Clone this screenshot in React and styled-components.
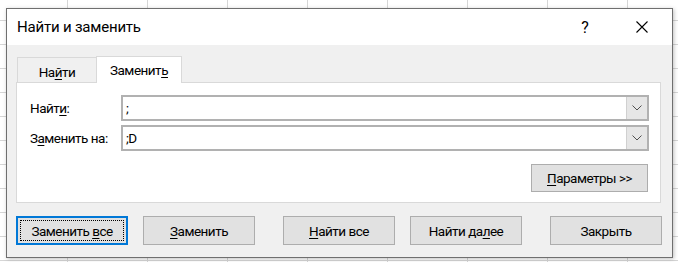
import React from "react";
import styled, { createGlobalStyle } from "styled-components";

const Global = createGlobalStyle`
  html, body { margin: 0; padding: 0; }
  body {
    width: 678px;
    height: 262px;
    overflow: hidden;
    background-color: #ffffff;
    background-image:
      linear-gradient(to right, #d6d6d6 1px, transparent 1px),
      linear-gradient(to bottom, #d6d6d6 1px, transparent 1px);
    background-size: 80px 100%, 100% 24px;
    background-position: 67px 0, 0 20px;
    font-family: Roboto, "Noto Sans", sans-serif;
    color: #000;
  }
  #root { padding: 8px 0 0 6px; }
`;

const Dialog = styled.div`
  width: 665px;
  height: 248px;
  border: 1px solid #6f6f6f;
  background: #f0f0f0;
  box-shadow: 1px 1px 4px rgba(0, 0, 0, 0.25);
  display: flex;
  flex-direction: column;
`;

const TitleBar = styled.div`
  height: 36px;
  background: #ffffff;
  display: flex;
  align-items: center;
  padding: 0 7px 0 10px;
`;

const Title = styled.div`
  flex: 1;
  font-size: 15px;
  letter-spacing: -0.2px;
  color: #000;
`;

const TitleButton = styled.div`
  width: 46px;
  height: 36px;
  display: flex;
  align-items: center;
  justify-content: center;
  font-size: 16px;
  color: #000;
  margin-left: ${(p) => p.$gap || 0}px;
`;

const Body = styled.div`
  padding: 10px 11px 0 9px;
  display: flex;
  flex-direction: column;
  font-size: 13.5px;
  letter-spacing: -0.5px;
`;

const Tabs = styled.div`
  display: flex;
  align-items: flex-end;
  padding-left: 1px;
  height: 27px;
`;

const Tab = styled.div`
  height: ${(p) => (p.$active ? 27 : 25)}px;
  width: ${(p) => p.$w}px;
  box-sizing: border-box;
  border: 1px solid #d9d9d9;
  border-bottom: none;
  border-right: ${(p) => (p.$active ? "1px solid #d9d9d9" : "none")};
  background: ${(p) => (p.$active ? "#ffffff" : "#f0f0f0")};
  display: flex;
  align-items: center;
  justify-content: center;
  padding-top: ${(p) => (p.$active ? 0 : 4)}px;
  position: relative;
  z-index: 1;
  margin-bottom: ${(p) => (p.$active ? -1 : 0)}px;
`;

const Panel = styled.div`
  border: 1px solid #d9d9d9;
  background: #ffffff;
  height: 121px;
  box-sizing: border-box;
  padding: 12px 11px 0 13px;
  display: flex;
  flex-direction: column;
`;

const Row = styled.div`
  display: flex;
  align-items: center;
  margin-top: ${(p) => p.$mt || 0}px;
`;

const Label = styled.div`
  width: 91px;
`;

const Combo = styled.div`
  flex: 1;
  height: 26px;
  box-sizing: border-box;
  border: 2px solid #b1b1b1;
  background: #fff;
  display: flex;
  align-items: stretch;
`;

const ComboText = styled.div`
  flex: 1;
  padding-left: 3px;
  display: flex;
  align-items: center;
`;

const ComboButton = styled.div`
  width: 20px;
  background: #e6e6e6;
  border-left: 1px solid #d0d0d0;
  display: flex;
  align-items: center;
  justify-content: center;
`;

const OptionsRow = styled.div`
  display: flex;
  justify-content: flex-end;
  margin-top: 13px;
  padding-right: 1px;
`;

const Button = styled.div`
  box-sizing: border-box;
  background: #e1e1e1;
  border: ${(p) => (p.$focused ? "2px solid #0078d7" : "1px solid #adadad")};
  display: flex;
  align-items: center;
  justify-content: center;
  position: relative;
  width: ${(p) => p.$w || 112}px;
  height: ${(p) => p.$h || 29}px;
`;

const FocusRing = styled.div`
  position: absolute;
  inset: 2px;
  border: 1px dotted #000;
  pointer-events: none;
`;

const Footer = styled.div`
  display: flex;
  margin-top: 13px;
  gap: 28px;
`;

const Group = styled.div`
  display: flex;
  gap: 15px;
`;

const U = styled.span`
  text-decoration: underline;
  text-underline-offset: 2px;
  text-decoration-thickness: 1px;
`;

const Chevron = () => (
  <svg width="10" height="6" viewBox="0 0 10 6">
    <path d="M0.5 0.5 L5 5 L9.5 0.5" fill="none" stroke="#505050" strokeWidth="1" />
  </svg>
);

const CloseIcon = () => (
  <svg width="12" height="12" viewBox="0 0 12 12">
    <path d="M0.5 0.5 L11.5 11.5 M11.5 0.5 L0.5 11.5" stroke="#000" strokeWidth="1.1" fill="none" />
  </svg>
);

export default function App() {
  return (
    <>
      <Global />
      <Dialog>
        <TitleBar>
          <Title>Найти и заменить</Title>
          <TitleButton>?</TitleButton>
          <TitleButton $gap={11}>
            <CloseIcon />
          </TitleButton>
        </TitleBar>
        <Body>
          <Tabs>
            <Tab $w={79}>
              На<U>й</U>ти
            </Tab>
            <Tab $w={86} $active>
              Заменит<U>ь</U>
            </Tab>
          </Tabs>
          <Panel>
            <Row>
              <Label>
                Найт<U>и</U>:
              </Label>
              <Combo>
                <ComboText>;</ComboText>
                <ComboButton>
                  <Chevron />
                </ComboButton>
              </Combo>
            </Row>
            <Row $mt={4}>
              <Label>
                З<U>а</U>менить на:
              </Label>
              <Combo>
                <ComboText>;D</ComboText>
                <ComboButton>
                  <Chevron />
                </ComboButton>
              </Combo>
            </Row>
            <OptionsRow>
              <Button $w={117} $h={28}>
                <span>
                  <U>П</U>араметры &gt;&gt;
                </span>
              </Button>
            </OptionsRow>
          </Panel>
          <Footer>
            <Group>
              <Button $focused>
                <FocusRing />
                <span>
                  Заменить <U>в</U>се
                </span>
              </Button>
              <Button>
                <span>
                  <U>З</U>аменить
                </span>
              </Button>
            </Group>
            <Group>
              <Button>
                <span>
                  <U>Н</U>айти все
                </span>
              </Button>
              <Button>
                <span>
                  Найти да<U>л</U>ее
                </span>
              </Button>
            </Group>
            <Group>
              <Button>Закрыть</Button>
            </Group>
          </Footer>
        </Body>
      </Dialog>
    </>
  );
}
